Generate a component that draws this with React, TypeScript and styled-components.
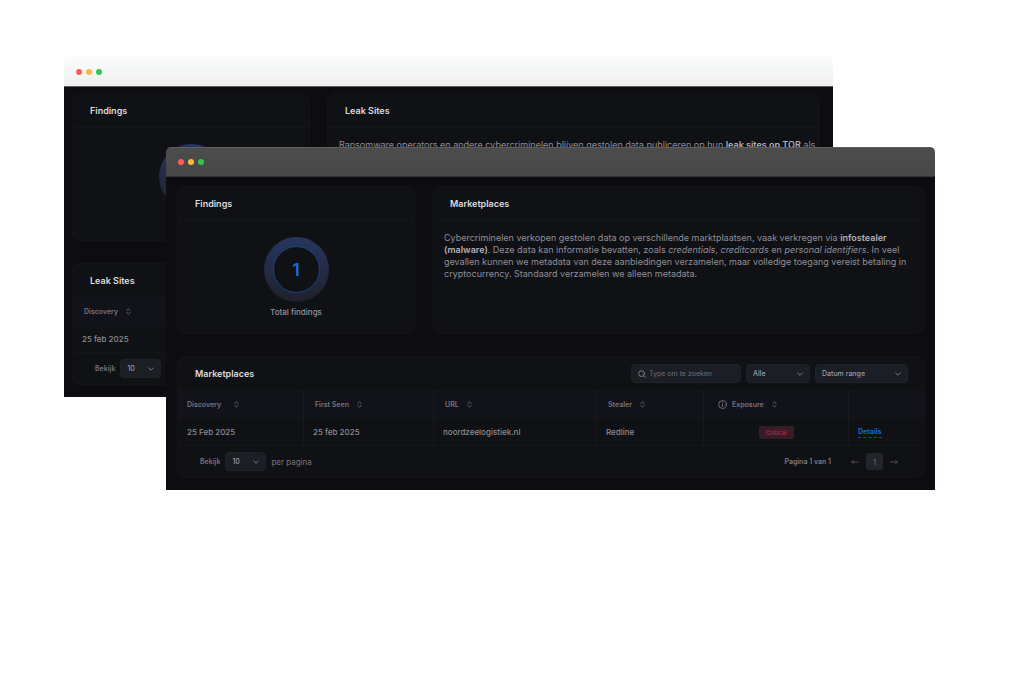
import React from "react";
import styled, { createGlobalStyle } from "styled-components";

const GlobalStyle = createGlobalStyle`
  *, *::before, *::after { box-sizing: border-box; }
  body {
    margin: 0;
    background: #ffffff;
    font-family: Inter, "Liberation Sans", sans-serif;
    -webkit-font-smoothing: antialiased;
  }
  button, input, select { font: inherit; }
`;

const Stage = styled.main`
  display: grid;
  align-items: start;
  padding: 57px 89px 57px 64px;
`;

const Window = styled.section<{ $front?: boolean }>`
  grid-area: 1 / 1;
  min-width: 0;
  margin: ${(p) => (p.$front ? "90px 0 0 102px" : "0 102px 0 0")};
  border-radius: 5px 5px 0 0;
  overflow: hidden;
  z-index: ${(p) => (p.$front ? 1 : 0)};
`;

const TitleBar = styled.div<{ $dark?: boolean }>`
  display: flex;
  align-items: center;
  gap: 4px;
  height: 30px;
  padding-left: 12px;
  background: ${(p) =>
    p.$dark
      ? "linear-gradient(#4c4c4c, #474747)"
      : "linear-gradient(#f9fbfc, #f0f0f0)"};
  border-top: 1px solid ${(p) => (p.$dark ? "#5e5e5e" : "#f9fbfc")};
  border-bottom: 1px solid ${(p) => (p.$dark ? "#363636" : "#5a5a5c")};
`;

const Light = styled.span<{ $color: string }>`
  width: 6px;
  height: 6px;
  border-radius: 50%;
  background: ${(p) => p.$color};
`;

const Body = styled.div<{ $front?: boolean }>`
  display: flex;
  flex-direction: column;
  gap: 22px;
  padding: ${(p) => (p.$front ? "9px 10px 12px 11px" : "6px 13px 12px 8px")};
  background: #0d0c11;
`;

const Summary = styled.div`
  display: grid;
  grid-template-columns: 238px 1fr;
  gap: 17px;
`;

const Card = styled.article`
  min-width: 0;
  border: 1px solid #131418;
  border-radius: 8px;
  background: #101115;
  overflow: hidden;
`;

const InfoCard = styled(Card)`
  height: 148px;
`;

const CardHead = styled.header`
  display: flex;
  align-items: center;
  justify-content: space-between;
  height: 34px;
  padding: 0 16px 0 17px;
  border-bottom: 1px solid #15161a;
`;

const CardTitle = styled.h2`
  margin: 0;
  padding-top: 1px;
  font-size: 9px;
  line-height: 12px;
  font-weight: 600;
  color: #dcdcde;
`;

const Score = styled.div`
  display: flex;
  flex-direction: column;
  align-items: center;
  gap: 4px;
  padding-top: 16px;
  font-size: 8px;
  line-height: 12px;
  font-weight: 500;
  color: #94949c;
`;

const Ring = styled.div`
  display: grid;
  place-items: center;
  width: 65px;
  height: 65px;
  border-radius: 50%;
  background: linear-gradient(#27365f, #1f202b);
`;

const RingCore = styled.div`
  display: grid;
  place-items: center;
  width: 47px;
  height: 47px;
  border: 1px solid #1b4384;
  border-radius: 50%;
  background: #101115;
  color: #1b6fdc;
  font-size: 17px;
  line-height: 20px;
  font-weight: 600;
`;

const Copy = styled.p`
  margin: 0;
  padding: 11px 1px 0 11px;
  font-size: 9px;
  line-height: 12px;
  color: #8e8e98;

  strong { font-weight: 600; color: #b0b0bc; }
`;

const Tools = styled.div`
  display: flex;
  gap: 5px;
`;

const Field = styled.label<{ $width: number }>`
  display: flex;
  align-items: center;
  position: relative;
  width: ${(p) => p.$width}px;
  height: 19px;
  border: 1px solid #20222b;
  border-radius: 4px;
  background: #1c1e26;
  color: #8e8e98;

  svg { flex: none; pointer-events: none; }
`;

const SearchField = styled(Field)`
  gap: 3px;
  padding-left: 6px;
`;

const SearchInput = styled.input`
  flex: 1;
  min-width: 0;
  padding: 0;
  border: 0;
  outline: 0;
  background: transparent;
  color: #8e8e98;
  font-size: 7px;
  line-height: 10px;

  &::placeholder { color: #6b6c75; opacity: 1; }
`;

const SelectField = styled(Field)`
  svg { position: absolute; right: 6px; }
`;

const Select = styled.select`
  appearance: none;
  width: 100%;
  height: 100%;
  padding: 0 16px 0 6px;
  border: 0;
  outline: 0;
  background: transparent;
  color: #9a9aa4;
  font-size: 7px;
  font-weight: 500;
`;

const Table = styled.table`
  width: 100%;
  table-layout: fixed;
  border-collapse: separate;
  border-spacing: 0;
`;

const Th = styled.th<{ $pad?: number }>`
  height: 28px;
  padding: 0 0 0 ${(p) => p.$pad ?? 11}px;
  background: #12121a;
  border-bottom: 1px solid #14151b;
  text-align: left;

  & + & { border-left: 1px solid #1a1b21; }
`;

const SortButton = styled.button<{ $gap?: number }>`
  display: flex;
  align-items: center;
  gap: ${(p) => p.$gap ?? 8}px;
  padding: 0;
  border: 0;
  background: none;
  color: #74747e;
  font-size: 7px;
  line-height: 10px;
  font-weight: 600;
`;

const HeadLabel = styled.span`
  display: flex;
  align-items: center;
  gap: 5px;
`;

const Td = styled.td<{ $center?: boolean }>`
  height: 27px;
  padding: 0 0 0 ${(p) => (p.$center ? 0 : 9)}px;
  border-bottom: 1px solid #15161a;
  color: #8c8c96;
  font-size: 8px;
  line-height: 12px;
  font-weight: 500;
  text-align: ${(p) => (p.$center ? "center" : "left")};

  & + & { border-left: 1px solid #18191d; }
`;

const Badge = styled.span`
  display: inline-block;
  width: 35px;
  height: 13px;
  border-radius: 2px;
  background: #381c25;
  color: #b62347;
  font-size: 6px;
  line-height: 13px;
  font-weight: 600;
  text-align: center;
  vertical-align: middle;
`;

const DetailsLink = styled.a`
  display: inline-block;
  border-bottom: 1px dashed #134a94;
  color: #1464c8;
  font-size: 7px;
  line-height: 10px;
  font-weight: 700;
  text-decoration: none;
  vertical-align: middle;
`;

const Footer = styled.footer`
  display: flex;
  align-items: center;
  justify-content: space-between;
  height: 31px;
  padding: 0 26px 0 22px;
  font-size: 8px;
  line-height: 12px;
  color: #74747e;
`;

const PageSize = styled.div`
  display: flex;
  align-items: center;
  gap: 5px;
`;

const SizeLabel = styled.label`
  font-size: 7px;
  font-weight: 600;
`;

const Pager = styled.nav`
  display: flex;
  align-items: center;
  gap: 7px;
`;

const PageStatus = styled.span`
  margin-right: 13px;
  font-size: 7px;
  font-weight: 600;
  color: #7b7b85;
`;

const PagerButton = styled.button<{ $current?: boolean }>`
  display: grid;
  place-items: center;
  width: ${(p) => (p.$current ? 17 : 8)}px;
  height: 17px;
  padding: 0;
  border: 0;
  border-radius: 3px;
  background: ${(p) => (p.$current ? "#24252c" : "none")};
  color: #5f5f69;
  font-size: 8px;
  font-weight: 500;
`;

const Chevron = () => (
  <svg width="6" height="4" viewBox="0 0 6 4" fill="none" stroke="#767781" strokeLinecap="round" strokeLinejoin="round" aria-hidden="true">
    <path d="M.6.8 3 3.2 5.4.8" />
  </svg>
);

const SortIcon = () => (
  <svg width="5" height="7" viewBox="0 0 5 7" fill="none" stroke="#6a6a74" strokeWidth=".8" strokeLinecap="round" strokeLinejoin="round" aria-hidden="true">
    <path d="M1 2.6v-.4L2.5.8 4 2.2v.4M1 4.4v.4l1.5 1.4L4 4.8v-.4" />
  </svg>
);

const SearchIcon = () => (
  <svg width="8" height="8" viewBox="0 0 8 8" fill="none" stroke="#85868f" strokeWidth=".9" strokeLinecap="round" aria-hidden="true">
    <circle cx="3.6" cy="3.6" r="2.9" />
    <path d="m5.8 5.8 1.6 1.6" />
  </svg>
);

const InfoIcon = () => (
  <svg width="9" height="9" viewBox="0 0 9 9" fill="none" stroke="#777781" strokeWidth=".9" strokeLinecap="round" aria-hidden="true">
    <circle cx="4.5" cy="4.5" r="3.9" />
    <path d="M4.5 4.2v2.3M4.5 2.5v.1" />
  </svg>
);

const Arrow = ({ back }: { back?: boolean }) => (
  <svg width="8" height="6" viewBox="0 0 8 6" fill="none" stroke="#5a5a64" strokeWidth=".8" strokeLinecap="round" strokeLinejoin="round" aria-hidden="true">
    <path d={back ? "M7.4 3H.8M2.4 1.4.8 3l1.6 1.6" : "M.6 3h6.6M5.6 1.4 7.2 3 5.6 4.6"} />
  </svg>
);

const Lights = () => (
  <>
    <Light $color="#fb5f58" />
    <Light $color="#fcbb40" />
    <Light $color="#34c84a" />
  </>
);

function FindingsCard({ count }: { count?: number }) {
  return (
    <InfoCard>
      <CardHead>
        <CardTitle>Findings</CardTitle>
      </CardHead>
      <Score>
        <Ring>{count !== undefined && <RingCore>{count}</RingCore>}</Ring>
        {count !== undefined && <span>Total findings</span>}
      </Score>
    </InfoCard>
  );
}

function DescriptionCard({ title, children }: { title: string; children: React.ReactNode }) {
  return (
    <InfoCard>
      <CardHead>
        <CardTitle>{title}</CardTitle>
      </CardHead>
      <Copy>{children}</Copy>
    </InfoCard>
  );
}

function PageSizePicker({ id, suffix }: { id: string; suffix?: string }) {
  return (
    <PageSize>
      <SizeLabel htmlFor={id}>Bekijk</SizeLabel>
      <SelectField as="div" $width={41}>
        <Select id={id} defaultValue="10">
          <option>10</option>
        </Select>
        <Chevron />
      </SelectField>
      {suffix && <span>{suffix}</span>}
    </PageSize>
  );
}

function LeakSitesWindow() {
  return (
    <Window>
      <TitleBar>
        <Lights />
      </TitleBar>
      <Body>
        <Summary>
          <FindingsCard />
          <DescriptionCard title="Leak Sites">
            Ransomware operators en andere cybercriminelen blijven gestolen data publiceren op hun{" "}
            <strong>leak sites op TOR</strong> als
          </DescriptionCard>
        </Summary>
        <Card>
          <CardHead>
            <CardTitle>Leak Sites</CardTitle>
          </CardHead>
          <Table>
            <thead>
              <tr>
                <Th scope="col">
                  <SortButton type="button">Discovery <SortIcon /></SortButton>
                </Th>
              </tr>
            </thead>
            <tbody>
              <tr>
                <Td>25 feb 2025</Td>
              </tr>
            </tbody>
          </Table>
          <Footer>
            <PageSizePicker id="leak-page-size" />
          </Footer>
        </Card>
      </Body>
    </Window>
  );
}

function MarketplacesWindow() {
  return (
    <Window $front>
      <TitleBar $dark>
        <Lights />
      </TitleBar>
      <Body $front>
        <Summary>
          <FindingsCard count={1} />
          <DescriptionCard title="Marketplaces">
            Cybercriminelen verkopen gestolen data op verschillende marktplaatsen, vaak verkregen via{" "}
            <strong>infostealer (malware)</strong>. Deze data kan informatie bevatten, zoals{" "}
            <em>credentials</em>, <em>creditcards</em> en <em>personal identifiers</em>. In veel
            gevallen kunnen we metadata van deze aanbiedingen verzamelen, maar volledige toegang
            vereist betaling in cryptocurrency. Standaard verzamelen we alleen metadata.
          </DescriptionCard>
        </Summary>
        <Card>
          <CardHead>
            <CardTitle>Marketplaces</CardTitle>
            <Tools>
              <SearchField $width={110}>
                <SearchIcon />
                <SearchInput type="search" placeholder="Type om te zoeken" aria-label="Type om te zoeken" />
              </SearchField>
              <SelectField $width={64}>
                <Select aria-label="Alle" defaultValue="Alle">
                  <option>Alle</option>
                </Select>
                <Chevron />
              </SelectField>
              <SelectField $width={93}>
                <Select aria-label="Datum range" defaultValue="Datum range">
                  <option>Datum range</option>
                </Select>
                <Chevron />
              </SelectField>
            </Tools>
          </CardHead>
          <Table>
            <colgroup>
              <col width="125" />
              <col width="130" />
              <col width="163" />
              <col width="107" />
              <col width="145" />
              <col width="76" />
            </colgroup>
            <thead>
              <tr>
                <Th scope="col" $pad={9}>
                  <SortButton type="button" $gap={13}>Discovery <SortIcon /></SortButton>
                </Th>
                <Th scope="col">
                  <SortButton type="button">First Seen <SortIcon /></SortButton>
                </Th>
                <Th scope="col">
                  <SortButton type="button">URL <SortIcon /></SortButton>
                </Th>
                <Th scope="col">
                  <SortButton type="button">Stealer <SortIcon /></SortButton>
                </Th>
                <Th scope="col" $pad={14}>
                  <SortButton type="button">
                    <HeadLabel><InfoIcon /> Exposure</HeadLabel> <SortIcon />
                  </SortButton>
                </Th>
                <Th scope="col" aria-label="Details" />
              </tr>
            </thead>
            <tbody>
              <tr>
                <Td>25 Feb 2025</Td>
                <Td>25 feb 2025</Td>
                <Td>noordzeelogistiek.nl</Td>
                <Td>Redline</Td>
                <Td $center><Badge>Critical</Badge></Td>
                <Td><DetailsLink href="#details">Details</DetailsLink></Td>
              </tr>
            </tbody>
          </Table>
          <Footer>
            <PageSizePicker id="market-page-size" suffix="per pagina" />
            <Pager aria-label="Pagina">
              <PageStatus>Pagina 1 van 1</PageStatus>
              <PagerButton type="button" aria-label="Vorige"><Arrow back /></PagerButton>
              <PagerButton type="button" $current aria-current="page">1</PagerButton>
              <PagerButton type="button" aria-label="Volgende"><Arrow /></PagerButton>
            </Pager>
          </Footer>
        </Card>
      </Body>
    </Window>
  );
}

export default function App() {
  return (
    <>
      <GlobalStyle />
      <Stage>
        <LeakSitesWindow />
        <MarketplacesWindow />
      </Stage>
    </>
  );
}
